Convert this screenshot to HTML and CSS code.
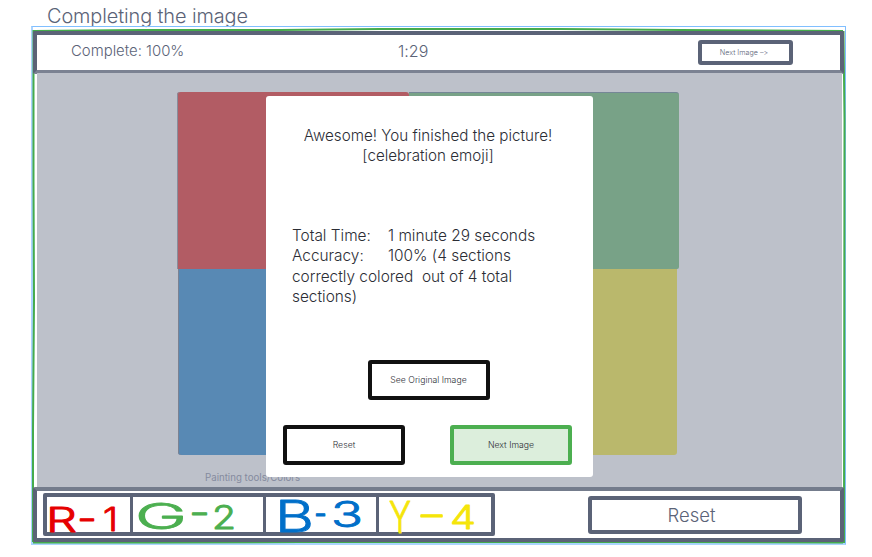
FILE: index.html
```html
<!DOCTYPE html>
<html lang="en">
<head>
<meta charset="utf-8">
<title>Completing the image</title>
<link rel="stylesheet" href="styles.css">
</head>
<body>
<h1 class="title"><span>Completing the image</span></h1>
<main class="frame">
  <svg class="sketch" viewBox="31 26 815 519" aria-hidden="true">
    <path d="M34 31 L140 30 H280 L380 29 H560 L680 30 L843 31"/>
    <path d="M33.5 30 V180 L34 300 L33 430 V542"/>
    <path d="M843.5 31 L844.5 120 L844 543"/>
    <path d="M33 542.5 H160 L300 542 H680 L843 542.5"/>
  </svg>
  <header class="topbar">
    <span class="complete">Complete: 100%</span>
    <span class="timer">1:29</span>
    <button class="box next-small"><span>Next Image –&gt;</span></button>
  </header>
  <section class="stage">
    <div class="picture">
      <div class="red"></div><div class="green"></div>
      <div class="blue"></div><div class="yellow"></div>
    </div>
    <p class="caption">Painting tools/Colors</p>
    <div class="modal">
      <h2>Awesome! You finished the picture!<br>[celebration emoji]</h2>
      <div class="stats">
        <div><span class="label">Total Time:</span>1 minute 29 seconds</div>
        <div><span class="label">Accuracy:</span>100% (4 sections</div>
        <div>correctly colored&nbsp; out of 4 total</div>
        <div>sections)</div>
      </div>
      <div class="actions">
        <button class="box dark original">See Original Image</button>
        <button class="box dark">Reset</button>
        <button class="box success">Next Image</button>
      </div>
    </div>
  </section>
  <footer class="bottombar">
    <div class="palette">
      <div class="swatch r"><svg viewBox="47 497 83 35"><text x="46" y="532" font-size="34" textLength="31" lengthAdjust="spacingAndGlyphs">R</text><text x="77" y="531" font-size="36" textLength="20" lengthAdjust="spacingAndGlyphs">-</text><text x="103" y="531" font-size="32" textLength="15" lengthAdjust="spacingAndGlyphs">1</text></svg></div>
      <div class="swatch g"><svg viewBox="133 497 130 35"><text x="135" y="529" font-size="36" textLength="52" lengthAdjust="spacingAndGlyphs">G</text><text x="189" y="525" font-size="36" textLength="21" lengthAdjust="spacingAndGlyphs">-</text><text x="212" y="529" font-size="32" textLength="24" lengthAdjust="spacingAndGlyphs">2</text></svg></div>
      <div class="swatch b"><svg viewBox="266 497 110 35"><text x="275" y="532" font-size="44" textLength="39" lengthAdjust="spacingAndGlyphs">B</text><text x="314" y="526" font-size="36" textLength="13" lengthAdjust="spacingAndGlyphs">-</text><text x="331" y="527" font-size="35" textLength="32" lengthAdjust="spacingAndGlyphs">3</text></svg></div>
      <div class="swatch y"><svg viewBox="379 497 112 35"><text x="389" y="533" font-size="43" textLength="22" lengthAdjust="spacingAndGlyphs">Y</text><text x="416" y="527" font-size="36" textLength="31" lengthAdjust="spacingAndGlyphs">-</text><text x="450" y="529" font-size="33" textLength="26" lengthAdjust="spacingAndGlyphs">4</text></svg></div>
    </div>
    <button class="box reset-large"><span>Reset</span></button>
  </footer>
</main>
</body>
</html>
```
FILE: styles.css
```css
* { box-sizing: border-box; }
body {
  margin: 0;
  height: 557px;
  overflow: hidden;
  background: #fff;
  color: #5b6377;
  font-family: Inter, "Liberation Sans", sans-serif;
  font-variant-ligatures: none;
  font-feature-settings: "calt" 0;
}
h1, h2, p { margin: 0; font-weight: 400; }
.title {
  height: 26px;
  padding: 4px 0 0 47px;
  font-size: 19.6px;
  line-height: 24px;
  letter-spacing: -0.1px;
}
.frame {
  position: relative;
  display: grid;
  grid-template-rows: 42px 414px 55px;
  width: 815px;
  height: 519px;
  margin-left: 31px;
  padding: 4px 2px 3px 1px;
  border: 1px solid #80bfff;
  border-left: 2px solid #aad4ff;
  border-bottom: 2px solid #aad4ff;
}
.sketch {
  position: absolute;
  left: -2px;
  top: -1px;
  width: 815px;
  height: 519px;
  fill: none;
  stroke: #45ab4d;
  stroke-width: 2;
}
.topbar {
  position: relative;
  display: grid;
  grid-template-columns: 327px 300px 95px;
  align-items: center;
  width: 811px;
  height: 43px;
  margin-left: -1px;
  padding: 0 0 4px 34px;
  background: #fff;
  border: 4px solid #5b6377;
  border-bottom-color: #7b8292;
  border-radius: 2px;
  font-size: 14.9px;
}
.timer { font-size: 16px; }
.box {
  display: flex;
  align-items: center;
  justify-content: center;
  padding: 0;
  background: #fff;
  border: 4px solid #5b6377;
  border-radius: 3px;
  color: inherit;
  font-family: inherit;
  font-feature-settings: inherit;
  white-space: nowrap;
}
.next-small { width: 95px; height: 25px; margin-top: 3px; font-size: 7.2px; }
.next-small span { margin-right: 3px; }
.stage {
  position: relative;
  width: 805px;
  margin-left: 3px;
  padding: 19px 0 0 140px;
  background: #bdc1ca;
}
.picture {
  display: grid;
  grid-template-columns: 232px 270px;
  grid-template-rows: 177px 186px;
  width: 502px;
}
.red { background: #b25c64; border-radius: 3px 3px 0 0; box-shadow: inset 1px 0 #898d9b; }
.green { background: #78a287; border-top: 1px solid #758796; border-radius: 0 3px 2px 0; }
.blue { margin-left: 1px; background: #5889b4; border-radius: 0 0 0 3px; box-shadow: inset 1px 0 #7b8292; }
.yellow { margin-right: 2px; background: #bab86c; border-radius: 0 0 3px 0; }
.caption {
  margin: 17px 0 0 28px;
  color: #858b9e;
  font-size: 9.7px;
  line-height: 12px;
}
.modal {
  position: absolute;
  left: 229px;
  top: 23px;
  width: 327px;
  height: 381px;
  padding: 30px 18px 12px 17px;
  background: #fff;
  border-radius: 3px;
  color: #2b2d35;
}
.modal h2 {
  margin-left: -2px;
  font-size: 15.2px;
  line-height: 20.3px;
  text-align: center;
}
.stats {
  margin: 59.5px 0 0 9px;
  font-size: 15.4px;
  line-height: 20.3px;
  white-space: nowrap;
}
.label { display: inline-block; width: 96px; }
.actions {
  display: grid;
  grid-template-columns: 122px 122px;
  grid-template-rows: 40px 40px;
  justify-content: space-between;
  row-gap: 25px;
  width: 289px;
  margin-top: 52.5px;
}
.actions .box { height: 40px; font-size: 8.7px; }
.original { grid-column: 1 / 3; justify-self: center; width: 122px; margin-left: 2px; }
.dark { border-color: #111; }
.actions .success { background: #dceedc; border-color: #4caf50; }
.title, .topbar, .modal h2, .stats, .box { font-weight: 300; }
.title { font-size: 19.9px; }
.bottombar {
  position: relative;
  display: flex;
  justify-content: space-between;
  align-items: flex-start;
  width: 811px;
  height: 55px;
  margin-left: -1px;
  padding: 2px 38px 0 6px;
  background: #fff;
  border: 4px solid #5b6377;
  border-top-color: #747c8c;
  border-radius: 2px;
}
.palette {
  display: grid;
  grid-template-columns: 86px 133px 113px 112px;
  width: 452px;
  height: 43px;
  border: 4px solid #5b6377;
  border-radius: 2px;
}
.swatch { height: 35px; border-right: 3px solid #5b6377; }
.swatch:last-child { border-right: 0; }
.swatch svg { display: block; width: 100%; height: 35px; overflow: visible; }
.swatch text {
  font-family: Inter, sans-serif;
  font-weight: 300;
  stroke: currentColor;
  stroke-width: 0.9;
  stroke-linejoin: round;
}
.r { color: #e60000; fill: #e60000; }
.g { color: #4caf50; fill: #4caf50; }
.b { color: #006fc9; fill: #006fc9; }
.y { color: #f5e50a; fill: #f5e50a; }
.reset-large { width: 214px; height: 38px; margin-top: 3px; font-size: 18.5px; }
.reset-large span { margin-right: 7px; }
```
